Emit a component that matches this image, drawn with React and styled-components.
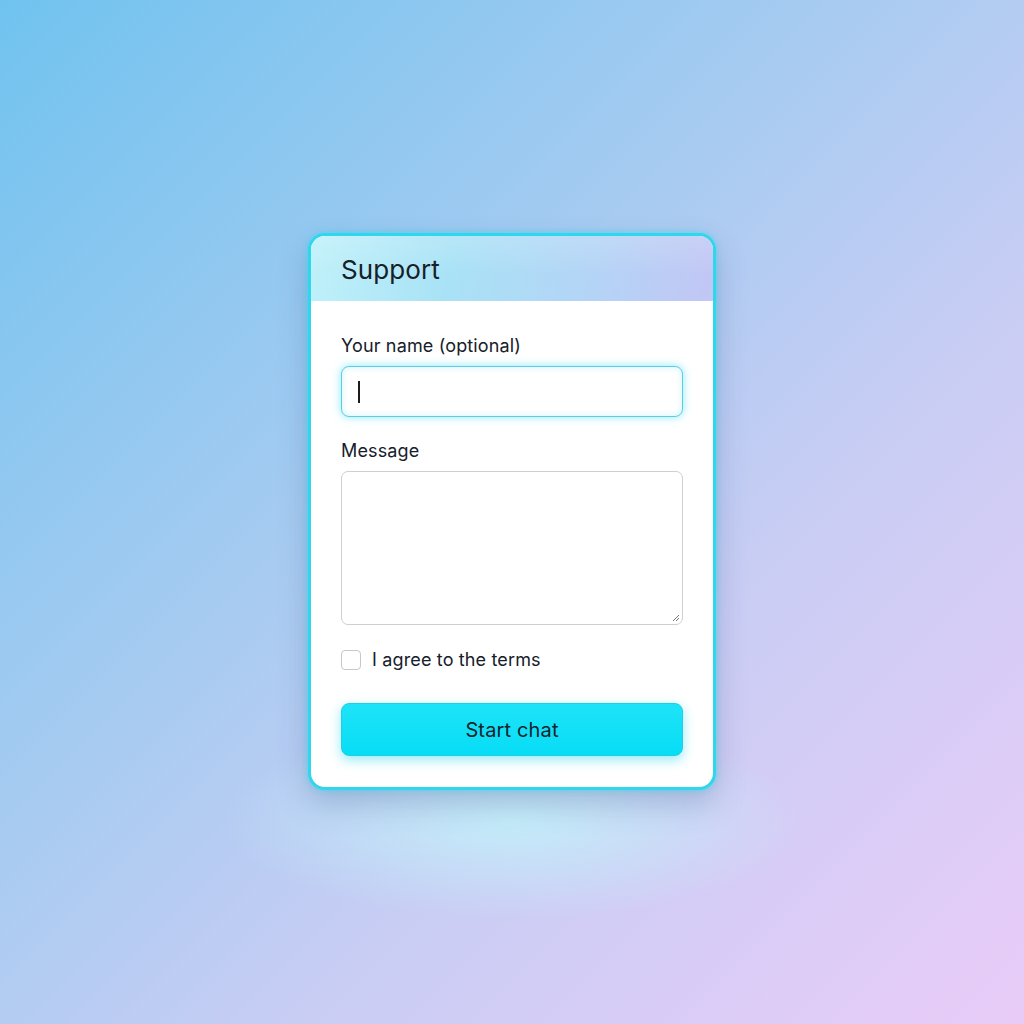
import React from 'react';
import styled, { createGlobalStyle } from 'styled-components';

const GlobalStyle = createGlobalStyle`
  html, body {
    margin: 0;
    padding: 0;
    height: 100%;
  }

  body {
    font-family: Inter, "Noto Sans", "Liberation Sans", sans-serif;
    color: #16202a;
  }

  #root {
    height: 100%;
  }
`;

const Page = styled.main`
  align-items: flex-start;
  background:
    radial-gradient(ellipse 290px 100px at 512px 820px, rgba(195, 240, 250, 0.9), rgba(195, 240, 250, 0) 100%),
    linear-gradient(135deg, #70c3ef 0%, #a6cbf1 40%, #c9cdf4 65%, #e9ccf8 100%);
  box-sizing: border-box;
  display: flex;
  height: 1024px;
  justify-content: center;
  padding-top: 233px;
  width: 1024px;
`;

const Card = styled.section`
  background: #fff;
  border: 3px solid #2fd6ec;
  border-radius: 17px;
  box-shadow:
    0 0 6px rgba(40, 220, 240, 0.6),
    0 14px 30px rgba(60, 90, 140, 0.28);
  overflow: hidden;
  width: 402px;
`;

const Header = styled.header`
  align-items: center;
  background:
    linear-gradient(180deg, rgba(255, 255, 255, 0.15), rgba(255, 255, 255, 0) 60%),
    linear-gradient(100deg, #bff1f9 0%, #a9e2f6 35%, #b4d4f6 70%, #c2c6f4 100%);
  box-sizing: border-box;
  display: flex;
  height: 65px;
  padding: 0 30px;

  h1 {
    font-size: 26px;
    font-weight: 400;
    letter-spacing: 0.1px;
    margin: 0;
    padding-top: 2px;
  }
`;

const Body = styled.form`
  display: flex;
  flex-direction: column;
  padding: 34px 30px 31px;
`;

const Field = styled.label`
  display: flex;
  flex-direction: column;
  gap: 9px;
  margin-bottom: ${props => props.spacing}px;

  span {
    font-size: 18px;
    letter-spacing: 0.15px;
    line-height: 22px;
  }
`;

const TextInput = styled.div`
  align-items: center;
  background: #fff;
  border: 1px solid #5fcbe0;
  border-radius: 8px;
  box-shadow:
    0 0 8px rgba(40, 215, 240, 0.55),
    inset 0 0 6px rgba(40, 215, 240, 0.25);
  box-sizing: border-box;
  display: flex;
  height: 51px;
  padding: 0 16px;

  i {
    background: #1b1b1b;
    display: block;
    height: 22px;
    width: 1.5px;
  }
`;

const TextArea = styled.div`
  border: 1px solid #cfcfcf;
  border-radius: 7px;
  box-sizing: border-box;
  height: 154px;
  position: relative;

  svg {
    bottom: 2px;
    position: absolute;
    right: 2px;
  }
`;

const CheckRow = styled.label`
  align-items: center;
  display: flex;
  font-size: 18px;
  gap: 11px;
  letter-spacing: 0.15px;
  margin-bottom: 33px;
`;

const Box = styled.span`
  border: 1px solid #c8c8c8;
  border-radius: 4px;
  box-sizing: border-box;
  display: block;
  height: 20px;
  width: 20px;
`;

const Button = styled.button`
  background: linear-gradient(180deg, #1ee3f8, #07ddf6);
  border: 1px solid #22cde2;
  border-radius: 8px;
  box-shadow: 0 4px 12px rgba(20, 210, 240, 0.45);
  color: #15232c;
  font-family: inherit;
  font-size: 20px;
  height: 53px;
  letter-spacing: 0.15px;
  width: 100%;
`;

const App = () => (
  <>
    <GlobalStyle />
    <Page>
      <Card>
        <Header>
          <h1>Support</h1>
        </Header>
        <Body onSubmit={e => e.preventDefault()}>
          <Field spacing={23}>
            <span>Your name (optional)</span>
            <TextInput>
              <i />
            </TextInput>
          </Field>
          <Field spacing={24}>
            <span>Message</span>
            <TextArea>
              <svg width="8" height="8" viewBox="0 0 8 8">
                <path d="M7 1L1 7M7 4L4 7" stroke="#777" strokeWidth="1" />
              </svg>
            </TextArea>
          </Field>
          <CheckRow>
            <Box />
            I agree to the terms
          </CheckRow>
          <Button type="submit">Start chat</Button>
        </Body>
      </Card>
    </Page>
  </>
);

export default App;
